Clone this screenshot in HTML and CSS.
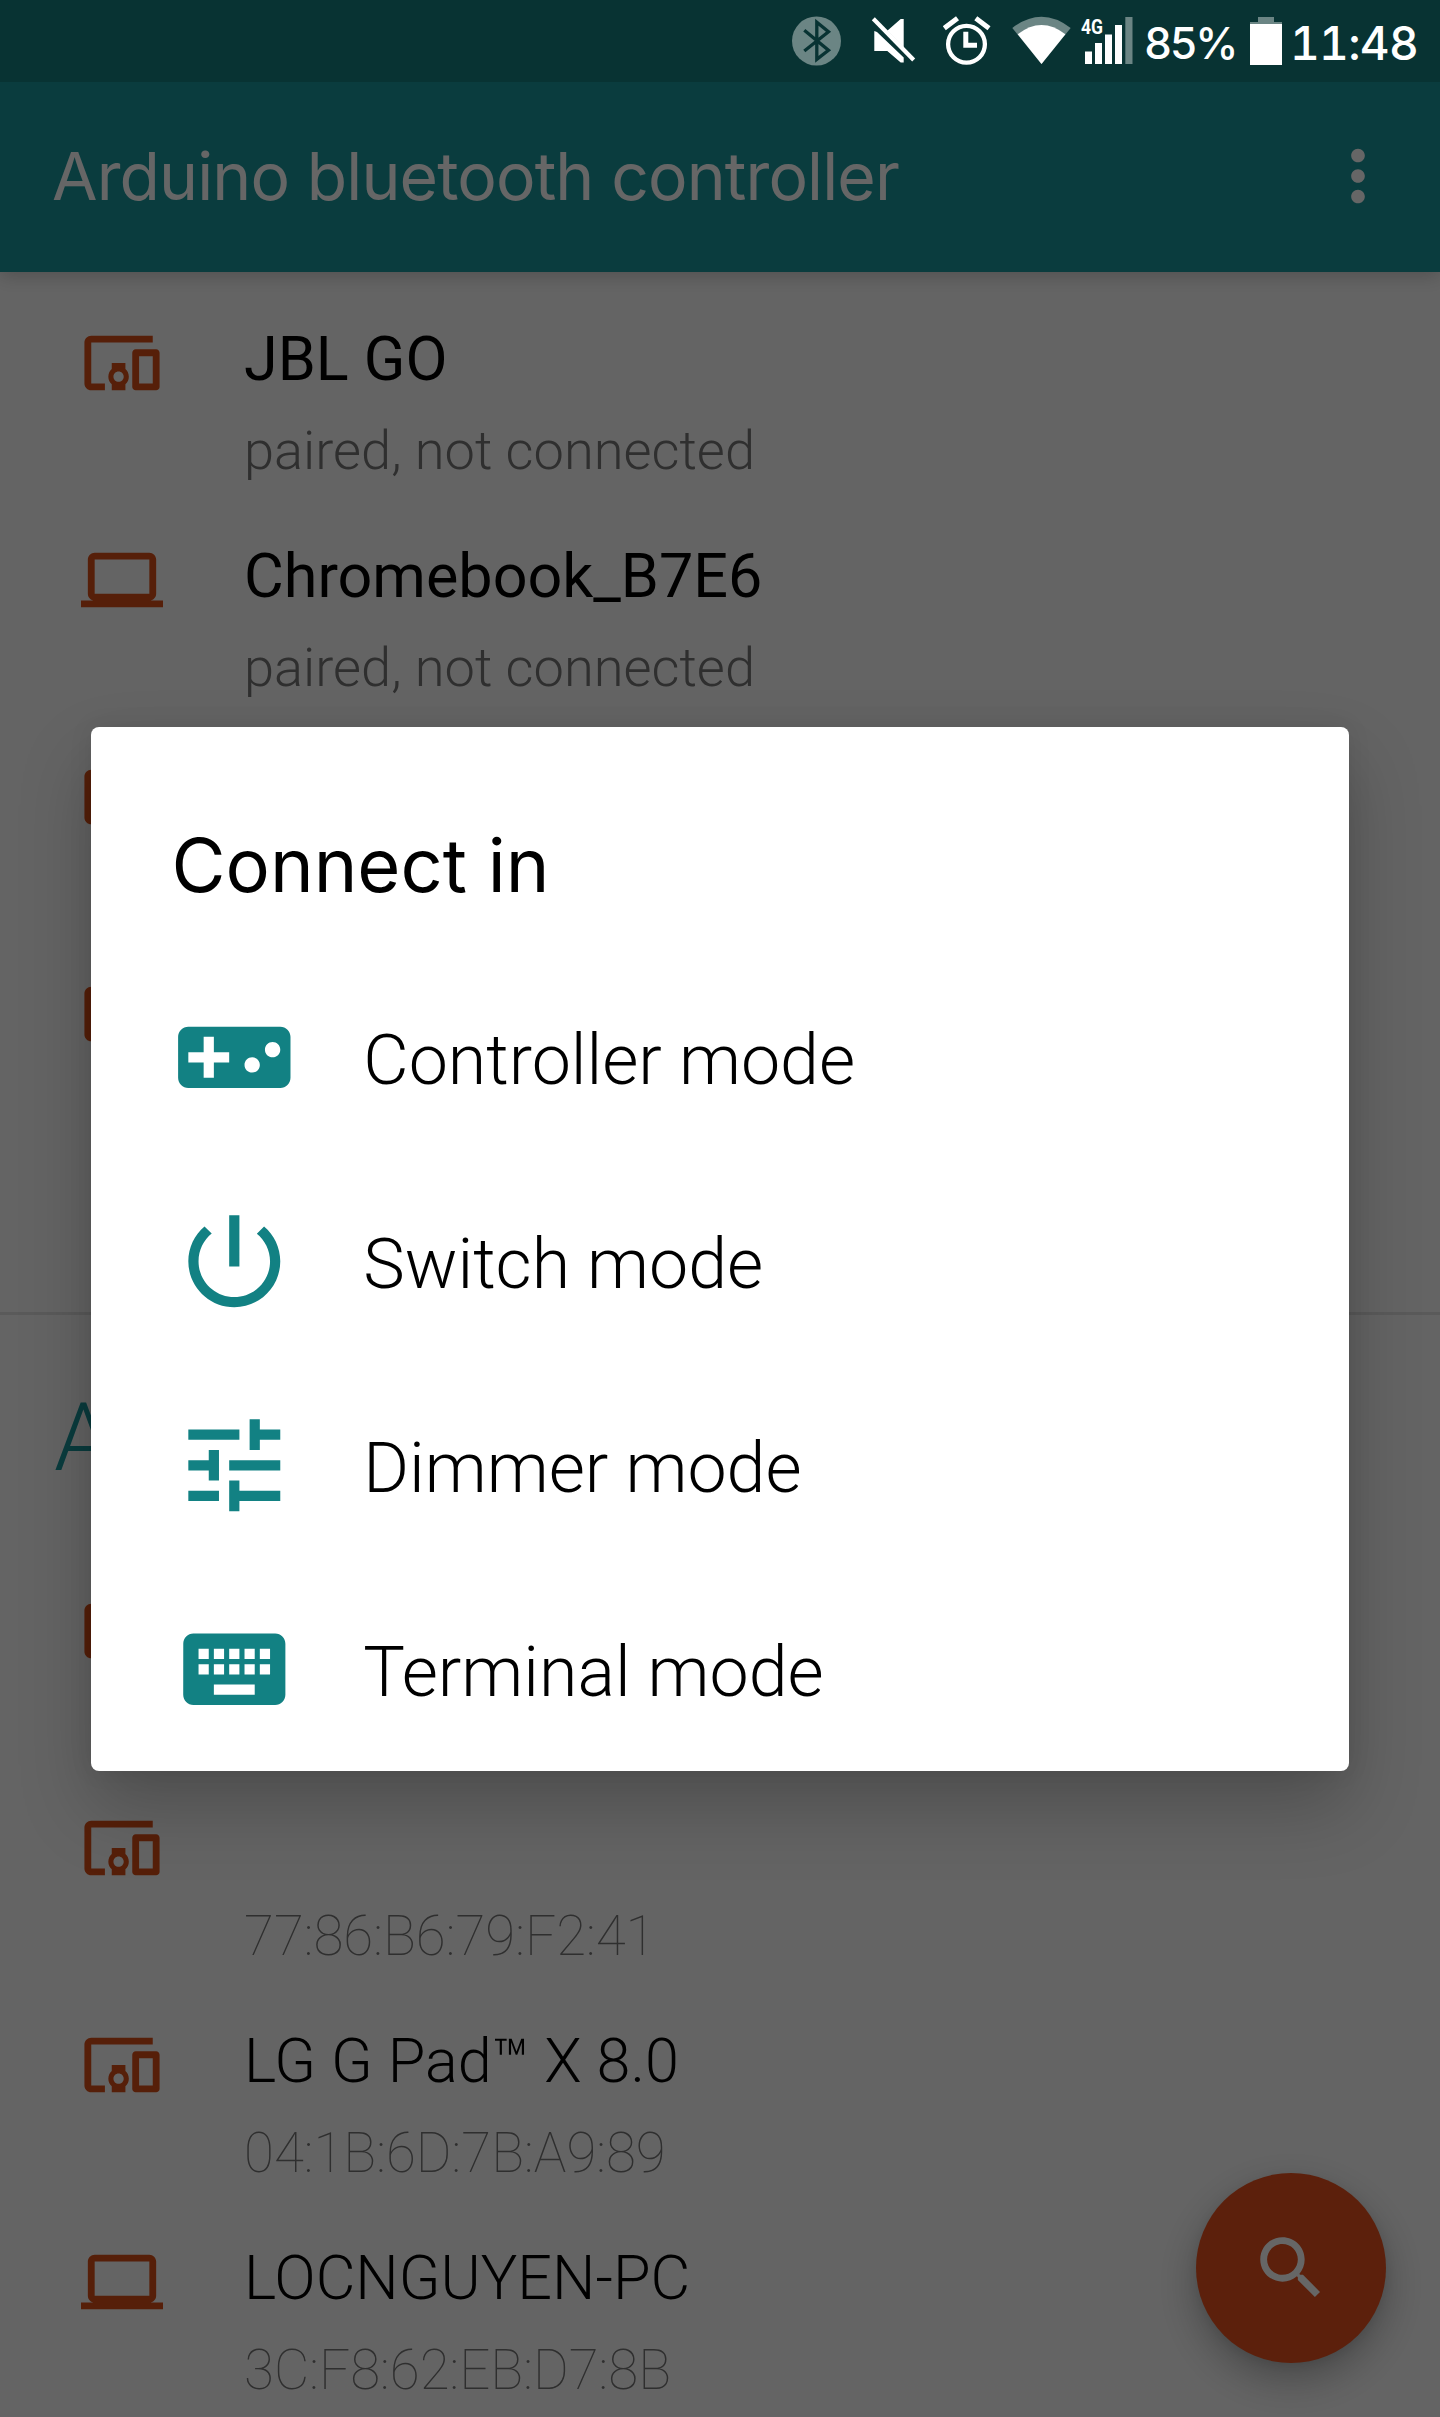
FILE: index.html
```html
<!DOCTYPE html>
<html lang="en">
<head>
<meta charset="utf-8">
<title>Arduino bluetooth controller</title>
<link rel="stylesheet" href="styles.css">
</head>
<body>
<svg class="defs" width="0" height="0" aria-hidden="true">
  <symbol id="devices" viewBox="0 0 24 24"><path d="M3 6h18V4H3c-1.1 0-2 .9-2 2v12c0 1.1.9 2 2 2h4v-2H3V6zm10 6H9v1.78c-.61.55-1 1.33-1 2.22s.39 1.67 1 2.22V20h4v-1.78c.61-.55 1-1.34 1-2.22s-.39-1.67-1-2.22V12zm-2 5.5c-.83 0-1.5-.67-1.5-1.5s.67-1.5 1.5-1.5 1.5.67 1.5 1.5-.67 1.5-1.5 1.5zM22 8h-6c-.5 0-1 .5-1 1v10c0 .5.5 1 1 1h6c.5 0 1-.5 1-1V9c0-.5-.5-1-1-1zm-1 10h-4v-8h4v8z"/></symbol>
  <symbol id="laptop" viewBox="0 0 24 24"><path d="M20 18c1.100 0 2-.9 2-2V6c0-1.100-.9-2-2-2H4c-1.100 0-2 .9-2 2v10c0 1.100.9 2 2 2H0v2h24v-2h-4zM4 6h16v10H4V6z"/></symbol>
</svg>
<div class="screen">
  <header class="status">
    <svg class="st-bt" viewBox="0 0 49 50"><circle cx="24.500" cy="25" r="24.500" fill="#6b8584"/><path d="M12.300 14.200 36.500 34.200 24.800 43.300V6.200L36.500 15.700 12.300 35" fill="none" stroke="#083333" stroke-width="3.300"/></svg>
    <svg class="st-mute" viewBox="0 0 45 47"><path d="M3.300 15 6 16 32.700 41.500v5h-3L16.300 35h-13zM16.300 14.800 29.700 3h3v28.500z" fill="#fff"/><path d="M2.300 2.700 42.700 44" stroke="#fff" stroke-width="4.200"/></svg>
    <svg class="st-alarm" viewBox="0 0 48 50"><g fill="none" stroke="#fff"><circle cx="23.500" cy="28.300" r="18.400" stroke-width="4.300"/><path d="M1.300 12.200 14.500 2.300M32.800 2.300 46 12.200" stroke-width="5"/></g><path d="M20.300 15.700h5v11h8.700v5H20.300z" fill="#fff"/></svg>
    <svg class="st-wifi" viewBox="0 0 59 48"><path d="M.3 12Q29.500-10.500 58.700 12L29.500 48z" fill="#6b8584"/><path d="M5.700 18.300Q29.500-.3 53.400 18.300L29.500 48z" fill="#fff"/></svg>
    <svg class="st-signal" viewBox="0 0 52 48"><text x="0" y="17.500" textLength="22" lengthAdjust="spacingAndGlyphs" class="net">4G</text><path d="M4 35.500h7V48H4zM14 27h7v21h-7zM24 18.500h7V48h-7zM34 9h7v39h-7z" fill="#fff"/><path d="M44.300 1h7.200v47h-7.200z" fill="#6b8584"/></svg>
    <span class="st-percent">85%</span>
    <svg class="st-battery" viewBox="0 0 32 48"><path d="M8 0h16v5h8v3H0V5h8z" fill="#6b8584"/><path d="M0 7h32v41H0z" fill="#fff"/></svg>
    <span class="st-clock">11:48</span>
  </header>

  <div class="appbar">
    <h1 class="title">Arduino bluetooth controller</h1>
    <svg class="more" viewBox="0 0 24 24"><path d="M12 8c1.100 0 2-.9 2-2s-.9-2-2-2-2 .9-2 2 .9 2 2 2zm0 2c-1.100 0-2 .9-2 2s.9 2 2 2 2-.9 2-2-.9-2-2-2zm0 6c-1.100 0-2 .9-2 2s.9 2 2 2 2-.9 2-2-.9-2-2-2z"/></svg>
  </div>

  <main class="content">
    <ul class="list paired">
      <li class="row"><svg class="dev"><use href="#devices"/></svg><div><p class="name">JBL GO</p><p class="sub">paired, not connected</p></div></li>
      <li class="row"><svg class="dev"><use href="#laptop"/></svg><div><p class="name">Chromebook_B7E6</p><p class="sub">paired, not connected</p></div></li>
      <li class="row"><svg class="dev"><use href="#devices"/></svg></li>
      <li class="row"><svg class="dev"><use href="#devices"/></svg></li>
    </ul>
    <h2 class="heading">A</h2>
    <ul class="list found">
      <li class="row"><svg class="dev"><use href="#devices"/></svg></li>
      <li class="row"><svg class="dev"><use href="#devices"/></svg><div><p class="name"></p><p class="sub">77:86:B6:79:F2:41</p></div></li>
      <li class="row"><svg class="dev"><use href="#devices"/></svg><div><p class="name">LG G Pad™ X 8.0</p><p class="sub">04:1B:6D:7B:A9:89</p></div></li>
      <li class="row"><svg class="dev"><use href="#laptop"/></svg><div><p class="name">LOCNGUYEN-PC</p><p class="sub">3C:F8:62:EB:D7:8B</p></div></li>
    </ul>
  </main>

  <div class="fab"><svg viewBox="0 0 24 24"><path d="M15.500 14h-.79l-.28-.27C15.410 12.590 16 11.110 16 9.500 16 5.910 13.090 3 9.500 3S3 5.910 3 9.500 5.910 16 9.500 16c1.610 0 3.090-.59 4.230-1.570l.27.280v.79l5 4.990L20.490 19l-4.990-5zm-6 0C7.010 14 5 11.990 5 9.500S7.010 5 9.500 5 14 7.010 14 9.500 11.990 14 9.500 14z"/></svg></div>
  <div class="scrim"></div>

  <section class="dialog">
    <h2 class="dialog-title">Connect in</h2>
    <ul class="modes">
      <li class="mode"><svg viewBox="0 0 24 24"><path d="M21 6H3c-1.100 0-2 .9-2 2v8c0 1.100.9 2 2 2h18c1.100 0 2-.9 2-2V8c0-1.100-.9-2-2-2zm-10 7H8v3H6v-3H3v-2h3V8h2v3h3v2zm4.500 2c-.83 0-1.500-.67-1.500-1.500s.67-1.500 1.500-1.500 1.500.67 1.500 1.500-.67 1.500-1.500 1.500zm4-3c-.83 0-1.500-.67-1.500-1.500S18.670 9 19.500 9s1.500.67 1.500 1.500-.67 1.500-1.500 1.500z"/></svg><span>Controller mode</span></li>
      <li class="mode"><svg viewBox="0 0 24 24"><path d="M13 3h-2v10h2V3zm4.830 2.170l-1.420 1.420C17.990 7.860 19 9.810 19 12c0 3.870-3.130 7-7 7s-7-3.130-7-7c0-2.190 1.010-4.140 2.580-5.420L6.170 5.170C4.230 6.820 3 9.260 3 12c0 4.970 4.030 9 9 9s9-4.030 9-9c0-2.740-1.230-5.180-3.170-6.830z"/></svg><span>Switch mode</span></li>
      <li class="mode"><svg viewBox="0 0 24 24"><path d="M3 17v2h6v-2H3zM3 5v2h10V5H3zm10 16v-2h8v-2h-8v-2h-2v6h2zM7 9v2H3v2h4v2h2V9H7zm14 4v-2H11v2h10zm-6-4h2V7h4V5h-4V3h-2v6z"/></svg><span>Dimmer mode</span></li>
      <li class="mode"><svg viewBox="0 0 24 24"><path d="M20 5H4c-1.100 0-1.990.9-1.990 2L2 17c0 1.100.9 2 2 2h16c1.100 0 2-.9 2-2V7c0-1.100-.9-2-2-2zm-9 3h2v2h-2V8zm0 3h2v2h-2v-2zM8 8h2v2H8V8zm0 3h2v2H8v-2zm-1 2H5v-2h2v2zm0-3H5V8h2v2zm9 7H8v-2h8v2zm0-4h-2v-2h2v2zm0-3h-2V8h2v2zm3 3h-2v-2h2v2zm0-3h-2V8h2v2z"/></svg><span>Terminal mode</span></li>
    </ul>
  </section>
</div>
</body>
</html>
```
FILE: styles.css
```css
* { box-sizing: border-box; margin: 0; padding: 0; }
html, body { width: 1440px; height: 2417px; overflow: hidden; }
body { font-family: Roboto, sans-serif; background: #fafafa; }
ul { list-style: none; }
svg { display: block; flex: none; }
.defs { position: absolute; }
.screen { position: relative; width: 1440px; height: 2417px; overflow: hidden; display: flex; flex-direction: column; }

/* system status bar, stays above the scrim */
.status { position: relative; z-index: 3; flex: none; height: 82px; display: flex; align-items: flex-start; padding: 16px 0 0 792px; background: #083333; color: #fff; font-family: Inter, sans-serif; font-feature-settings: "tnum"; white-space: nowrap; }
.st-bt { width: 49px; height: 50px; }
.st-mute { width: 45px; height: 47px; margin-left: 30px; }
.st-alarm { width: 48px; height: 50px; margin-left: 27px; }
.st-wifi { width: 59px; height: 48px; margin-left: 21px; }
.st-signal { width: 52px; height: 48px; margin-left: 10px; }
.net { font: 700 20px Roboto, sans-serif; fill: #fff; }
.st-percent { width: 90px; margin-left: 11px; font-size: 43.500px; font-weight: 500; line-height: 54px; letter-spacing: -2.500px; }
.st-battery { width: 32px; height: 48px; margin: 1px 0 0 16px; }
.st-clock { margin-left: 8px; font-size: 46px; font-weight: 500; line-height: 54px; letter-spacing: -.7px; }

.appbar { position: relative; z-index: 1; flex: none; height: 190px; display: flex; align-items: center; justify-content: space-between; padding: 0 41px 2px 52px; background: #19969b; color: #fff; box-shadow: 0 4px 18px rgba(0, 0, 0, .2); }
.title { font: 400 66px/90px Inter, sans-serif; letter-spacing: -.88px; }
.more { width: 82px; height: 82px; fill: #fff; }

.content { flex: 1; min-height: 0; overflow: hidden; }
.paired { height: 1043px; padding-top: 47px; border-bottom: 3px solid #e2e2e2; }
.row { display: flex; height: 217px; padding-left: 81px; }
.dev { width: 82px; height: 82px; margin: 3px 81px 0 0; fill: #d84f18; }
.name { height: 80px; font-size: 61.100px; line-height: 80px; white-space: pre; }
.sub { margin-top: 12px; font-size: 54.200px; font-weight: 300; line-height: 80px; color: #757575; }
.found .name { font-weight: 300; }
.found .sub { font-size: 54.600px; font-weight: 100; }
.heading { height: 272px; padding: 71px 0 0 54px; font-size: 94px; font-weight: 300; line-height: 104px; color: #19969b; }

.fab { position: absolute; right: 54px; bottom: 54px; width: 190px; height: 190px; border-radius: 50%; background: #e6511e; display: flex; align-items: center; justify-content: center; box-shadow: 0 16px 40px rgba(0, 0, 0, .28), 0 4px 12px rgba(0, 0, 0, .08); }
.fab svg { width: 82px; height: 82px; fill: #fff; }

.scrim { position: absolute; inset: 0; z-index: 2; background: rgba(0, 0, 0, .6); }

.dialog { position: absolute; z-index: 4; left: 91px; top: 727px; width: 1258px; height: 1044px; border-radius: 8px; background: #fff; color: #000; box-shadow: 0 36px 72px rgba(0, 0, 0, .22), 0 0 24px rgba(0, 0, 0, .08); }
.dialog-title { height: 228px; padding: 93px 0 0 80.500px; font: 400 74px/90px Inter, sans-serif; }
.mode { display: flex; align-items: center; height: 204px; padding-left: 81.700px; gap: 68px; }
.mode svg { width: 122.600px; height: 122.600px; fill: #128183; }
.mode span { padding-top: 5px; font-size: 69.900px; font-weight: 300; line-height: 84px; }
```
